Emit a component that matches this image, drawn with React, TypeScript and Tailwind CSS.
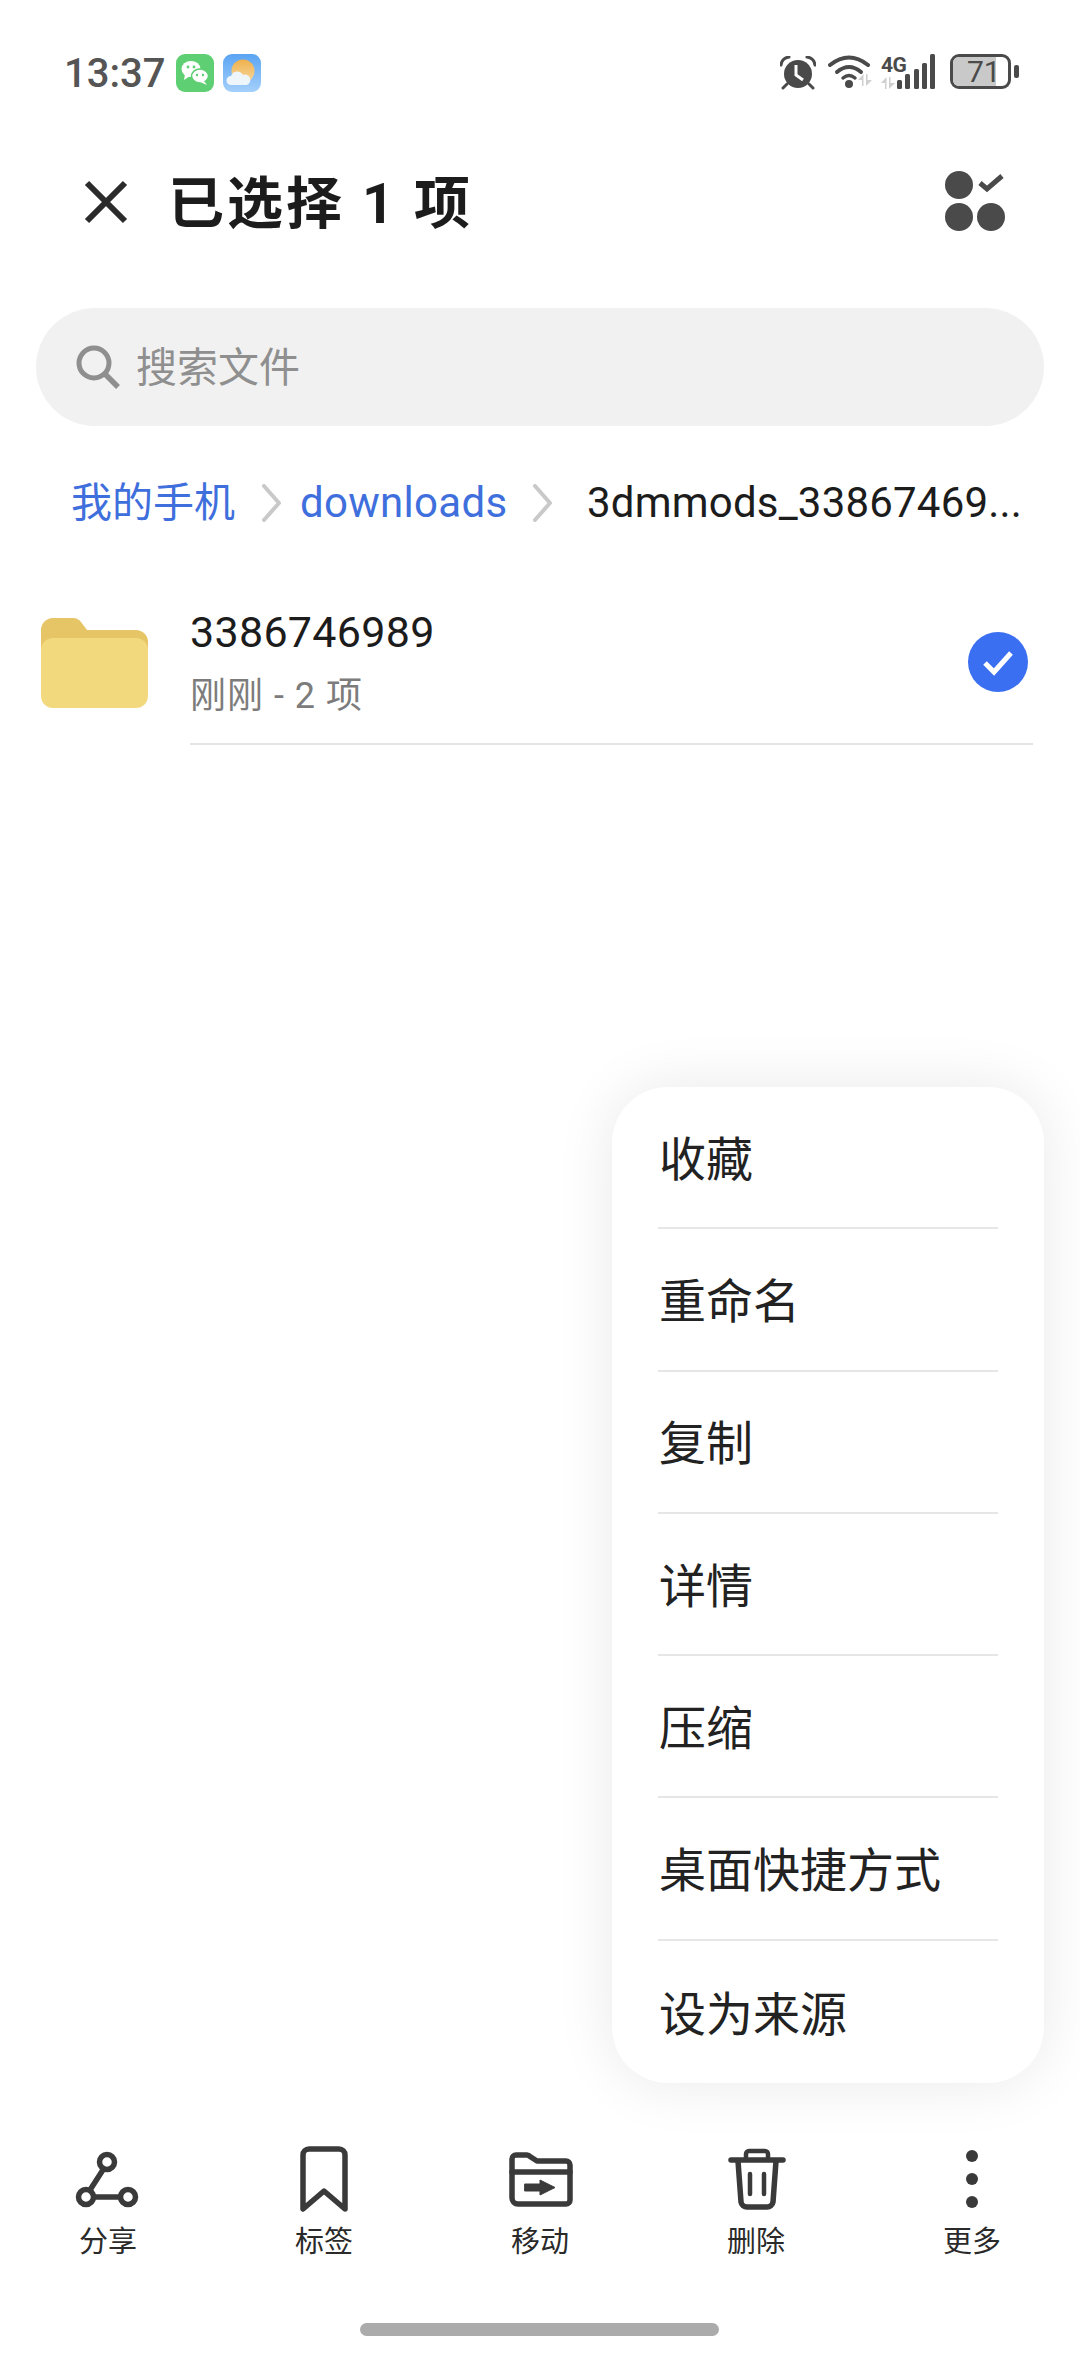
import React from 'react';

const MENU = ['收藏', '重命名', '复制', '详情', '压缩', '桌面快捷方式', '设为来源'];

const Chevron: React.FC<{ className?: string }> = ({ className }) => (
  <svg width="22" height="38" viewBox="0 0 22 38" fill="none" className={className}>
    <path d="M3 2 L18 19 L3 36" stroke="#c9c9c9" strokeWidth="4" strokeLinecap="round" strokeLinejoin="round" />
  </svg>
);

const Arrows: React.FC = () => (
  <svg width="14" height="12" viewBox="0 0 14 12" fill="#cfcfcf">
    <path d="M5.5 0 V12 H4 V6 H0 Z" />
    <path d="M8 0 H9.5 V6 H14 L8 12 Z" />
  </svg>
);

const StatusBar: React.FC = () => (
  <div className="flex h-[92px] items-start pt-[54px]">
    <span className="mt-[1px] ml-[64px] w-[111px] text-[40px] leading-[38px] font-medium text-[#555555]">13:37</span>
    {/* wechat notification */}
    <svg width="38" height="38" viewBox="0 0 38 38" className="ml-[1px]">
      <rect width="38" height="38" rx="9" fill="#5ecf72" />
      <ellipse cx="15" cy="15" rx="9.5" ry="8" fill="#fff" />
      <path d="M9 20 L8 26 L14 22 Z" fill="#fff" />
      <ellipse cx="24" cy="22" rx="8.5" ry="7" stroke="#5ecf72" strokeWidth="1.5" fill="#fff" />
      <path d="M28 27 L31 31 L24 28 Z" fill="#fff" />
      <circle cx="12" cy="13" r="1.4" fill="#5ecf72" />
      <circle cx="18" cy="13" r="1.4" fill="#5ecf72" />
      <circle cx="21" cy="21" r="1.2" fill="#5ecf72" />
      <circle cx="27" cy="21" r="1.2" fill="#5ecf72" />
    </svg>
    {/* weather notification */}
    <svg width="38" height="38" viewBox="0 0 38 38" className="ml-[9px]">
      <defs>
        <linearGradient id="sky" x1="0" y1="0" x2="0" y2="1">
          <stop offset="0" stopColor="#5aa4f3" />
          <stop offset="1" stopColor="#a5d0fb" />
        </linearGradient>
        <linearGradient id="sun" x1="0" y1="0" x2="0" y2="1">
          <stop offset="0" stopColor="#eeb04c" />
          <stop offset="1" stopColor="#f8d9a0" />
        </linearGradient>
      </defs>
      <rect width="38" height="38" rx="9" fill="url(#sky)" />
      <circle cx="20" cy="17" r="11.5" fill="url(#sun)" />
      <path d="M8 31 a4.5 4.5 0 0 1 0-9 a6.5 6.5 0 0 1 12-1 a5 5 0 0 1 4 10 Z" fill="#eef5fb" />
    </svg>

    <div className="ml-auto flex items-start">
      <svg width="36" height="34" viewBox="0 0 36 34" fill="#4a4a4a" className="mt-[2px]">
        <path d="M1 9 Q2 2 9 1" fill="none" stroke="#4a4a4a" strokeWidth="3" strokeLinecap="round" />
        <path d="M35 9 Q34 2 27 1" fill="none" stroke="#4a4a4a" strokeWidth="3" strokeLinecap="round" />
        <circle cx="18" cy="18" r="14" />
        <path d="M7 28 L3 32 M29 28 L33 32" stroke="#4a4a4a" strokeWidth="3" strokeLinecap="round" />
        <path d="M16 9 V19 L23 24" fill="none" stroke="#ffffff" strokeWidth="3" />
      </svg>
      <div className="relative ml-[12px] h-[34px] w-[50px]">
        <svg width="42" height="34" viewBox="0 0 42 34" fill="none" className="mt-[1px]">
          <path d="M2 10 Q21 -5 40 10" stroke="#4a4a4a" strokeWidth="4" strokeLinecap="round" />
          <path d="M9 17 Q21 7 33 17" stroke="#4a4a4a" strokeWidth="4" strokeLinecap="round" />
          <path d="M15 23 Q21 18 27 23" stroke="#4a4a4a" strokeWidth="3.5" strokeLinecap="round" />
          <circle cx="21" cy="29" r="4" fill="#4a4a4a" />
        </svg>
        <div className="absolute top-[20px] left-[30px]"><Arrows /></div>
      </div>
      <div className="relative ml-[3px] h-[36px] w-[54px]">
        <span className="absolute top-[1px] left-0 text-[21px] leading-[20px] font-bold tracking-[-0.5px] text-[#4a4a4a] font-['Roboto',sans-serif]">4G</span>
        <div className="absolute top-[23px] left-0"><Arrows /></div>
        <svg width="40" height="36" viewBox="0 0 40 36" fill="#4a4a4a" className="absolute top-0 left-[16px]">
          <rect x="0" y="26" width="5" height="9" rx="1.5" />
          <rect x="8" y="20" width="5" height="15" rx="1.5" />
          <rect x="17" y="15" width="5" height="20" rx="1.5" />
          <rect x="25" y="9" width="5" height="26" rx="1.5" />
          <rect x="33" y="0" width="5" height="35" rx="1.5" />
        </svg>
      </div>
      <div className="relative ml-[15px] h-[35px] w-[61px] overflow-hidden rounded-[9px] border-[3px] border-[#4a4a4a]">
        <div className="h-full w-[43px] bg-[#c9c9c9]" />
        <span className="absolute inset-y-0 left-[14px] text-[30px] leading-[30px] text-[#4a4a4a]">71</span>
      </div>
      <div className="mt-[11px] ml-[3px] h-[13px] w-[5px] rounded-[2px] bg-[#4a4a4a]" />
      <div className="w-[61px]" />
    </div>
  </div>
);

const ToolbarItem: React.FC<{ label: string; children: React.ReactNode }> = ({ label, children }) => (
  <div className="flex flex-col items-center">
    <svg width="90" height="68" viewBox="0 0 90 68" fill="none" stroke="#3a3a3a" strokeWidth="5.5" strokeLinecap="round" strokeLinejoin="round">
      {children}
    </svg>
    <span className="mt-[12px] mb-[-2px] text-[29px] leading-[34px] text-[#2a2a2a]">{label}</span>
  </div>
);

const App: React.FC = () => {
  return (
    <div className="relative flex h-[2363px] w-[1080px] flex-col overflow-hidden bg-white font-['Roboto','Noto_Sans_CJK_SC',sans-serif]">
      <StatusBar />

      <div className="mt-[65px] flex h-[90px] items-center">
        <svg width="44" height="44" viewBox="0 0 44 44" className="ml-[84px]">
          <path d="M3 3 L41 41 M41 3 L3 41" stroke="#2b2b2b" strokeWidth="6" />
        </svg>
        <h1 className="mt-[3px] ml-[40px] text-[56px] leading-[60px] font-bold tracking-[3px] whitespace-pre text-[#1c1c1c]">已选择 1 项</h1>
        <svg width="62" height="62" viewBox="0 0 62 62" className="mr-[73px] ml-auto" fill="#4a4a4a">
          <circle cx="14" cy="14" r="14" />
          <circle cx="14" cy="46" r="14" />
          <circle cx="46" cy="46" r="14" />
          <path d="M35 12 L42 18 L57 5" fill="none" stroke="#4a4a4a" strokeWidth="5" />
        </svg>
      </div>

      <div className="mx-[36px] mt-[61px] flex h-[118px] items-center rounded-[59px] bg-[#f1f1f1]">
        <svg width="44" height="44" viewBox="0 0 44 44" fill="none" className="ml-[40px]" stroke="#8f8f8f">
          <circle cx="18" cy="18" r="15" strokeWidth="5" />
          <path d="M29 29 L42 42" strokeWidth="5.5" />
        </svg>
        <span className="mt-[2px] ml-[16px] text-[41px] leading-[50px] text-[#8f8f8f]">搜索文件</span>
      </div>

      <div className="mt-[47px] flex h-[60px] items-center pl-[71px]">
        <span className="w-[165px] text-[41px] leading-[50px] whitespace-nowrap text-[#3f6fdc]">我的手机</span>
        <Chevron className="ml-[25px]" />
        <span className="ml-[17px] w-[212px] text-[42px] leading-[50px] tracking-[0.3px] text-[#3f6fdc]">downloads</span>
        <Chevron className="ml-[20px]" />
        <span className="ml-[33px] text-[42px] leading-[50px] tracking-[0.2px] whitespace-nowrap text-[#1c1c1c]">3dmmods_33867469...</span>
      </div>

      <div className="mt-[47px] flex h-[165px] items-center pl-[41px] pr-[47px]">
        <svg width="107" height="90" viewBox="0 0 107 90">
          <path d="M0 12 a12 12 0 0 1 12-12 h20 a10 10 0 0 1 8 4 l6 8 h49 a12 12 0 0 1 12 12 v30 H0 Z" fill="#e6c566" />
          <rect x="0" y="20" width="107" height="70" rx="12" fill="#f2d97e" />
        </svg>
        <div className="ml-[42px] flex h-full flex-1 items-center border-b-2 border-[#e4e4e4] pr-[5px]">
          <div className="flex flex-col">
            <span className="text-[43px] leading-[50px] tracking-[0.3px] text-[#1c1c1c]">3386746989</span>
            <span className="mt-[19px] text-[36px] leading-[40px] tracking-[1px] text-[#7c7c7c]">刚刚 - 2 项</span>
          </div>
          <svg width="60" height="60" viewBox="0 0 60 60" className="ml-auto">
            <circle cx="30" cy="30" r="30" fill="#3b6ff2" />
            <path d="M17 31 L26 40 L43 21" fill="none" stroke="#ffffff" strokeWidth="5" />
          </svg>
        </div>
      </div>

      {/* overflow menu sits over the page */}
      <div className="absolute top-[1087px] left-[612px] w-[432px] rounded-[56px] bg-white px-[46px] shadow-[0_0_60px_rgba(0,0,0,0.09)]">
        {MENU.map((item, i) => (
          <div key={item} className={`flex h-[142.3px] items-center pt-[6px] pl-[1px] text-[47px] text-[#222222] ${i < MENU.length - 1 ? 'border-b-2 border-[#e6e6e6]' : ''}`}>
            {item}
          </div>
        ))}
      </div>

      <div className="mt-auto grid grid-cols-5">
        <ToolbarItem label="分享">
          <circle cx="44" cy="17" r="7.5" />
          <circle cx="23" cy="52" r="7.5" />
          <circle cx="65" cy="52" r="7.5" />
          <path d="M40.5 24 L27 45 M31 52 H57" />
        </ToolbarItem>
        <ToolbarItem label="标签">
          <path d="M24 64 V10 a6 6 0 0 1 6-6 h30 a6 6 0 0 1 6 6 V64 L45 46 Z" />
        </ToolbarItem>
        <ToolbarItem label="移动">
          <path d="M17 14 a4 4 0 0 1 4-4 h11 a4 4 0 0 1 3 1.5 L42 16 h29 a4 4 0 0 1 4 4 v35 a4 4 0 0 1 -4 4 H23 a6 6 0 0 1 -6 -6 Z" />
          <path d="M17 27 H75" />
          <path d="M30 39 H45 V35 L60 42.5 L45 50 V46 H30 Z" fill="#3a3a3a" strokeWidth="1" />
        </ToolbarItem>
        <ToolbarItem label="删除">
          <path d="M20 15 H72" />
          <path d="M35 14 V9 a3 3 0 0 1 3-3 h16 a3 3 0 0 1 3 3 V14" strokeWidth="4.5" />
          <path d="M27 16 L30 57 a6 6 0 0 0 6 5 h20 a6 6 0 0 0 6-5 L65 16" />
          <path d="M39 29 V49 M53 29 V49" strokeWidth="4.5" />
        </ToolbarItem>
        <ToolbarItem label="更多">
          <circle cx="45" cy="11" r="6" fill="#3a3a3a" stroke="none" />
          <circle cx="45" cy="34" r="6" fill="#3a3a3a" stroke="none" />
          <circle cx="45" cy="57" r="6" fill="#3a3a3a" stroke="none" />
        </ToolbarItem>
      </div>
      <div className="mt-[66px] mb-[27px] ml-[360px] h-[13px] w-[359px] rounded-full bg-[#ababab]" />
    </div>
  );
};

export default App;
